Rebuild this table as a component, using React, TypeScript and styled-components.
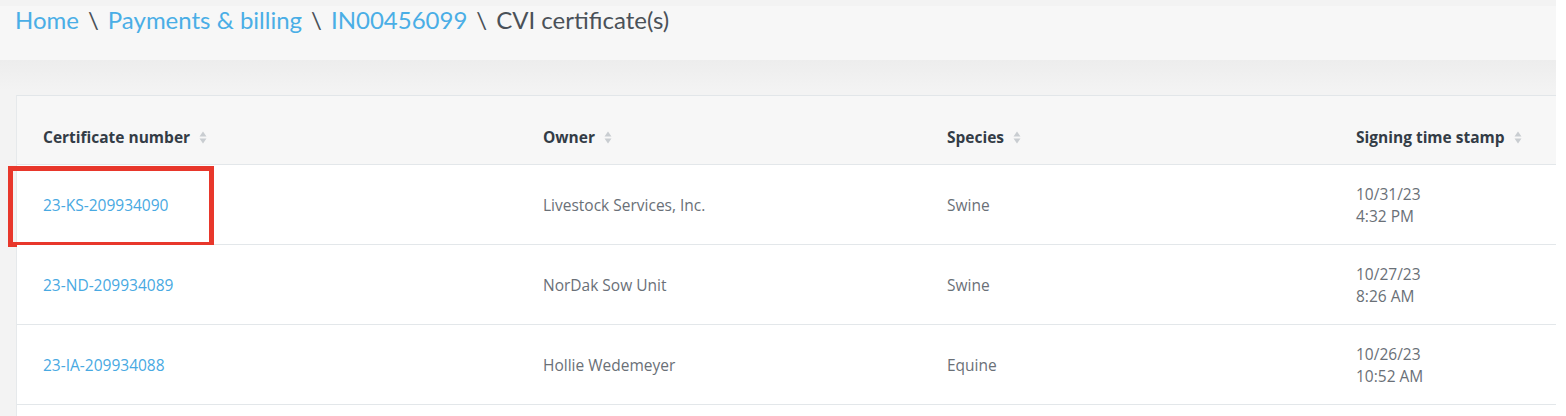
import React from "react";
import styled, { createGlobalStyle } from "styled-components";

const Global = createGlobalStyle`
  html, body { margin: 0; padding: 0; background: #ffffff; }
  body { font-family: "Open Sans", "Liberation Sans", sans-serif; }
`;

const Page = styled.div`
  width: 1556px;
  padding-top: 6px;
  height: 410px;
  display: flex;
  flex-direction: column;
  background: #f3f3f3;
  overflow: hidden;
`;

const Header = styled.header`
  height: 54px;
  background: #f7f7f7;
  padding: 0 0 0 15px;
  box-sizing: border-box;
`;

const Crumbs = styled.nav`
  display: flex;
  align-items: baseline;
  gap: 9px;
  font-family: Lato, "Open Sans", sans-serif;
  font-size: 24px;
  line-height: 28px;
`;

const CrumbLink = styled.a`
  color: #4aaee6;
  text-decoration: none;
`;

const Sep = styled.span`
  color: #4a5158;
`;

const Current = styled.span`
  color: #4a5158;
`;

const Body = styled.main`
  flex: 1;
  padding: 35px 0 0 16px;
  background: linear-gradient(#ededed 0px, #f3f3f3 30px, #f3f3f3 100%);
`;

const Card = styled.section`
  background: #ffffff;
  border-top: 1px solid #e2e6e9;
  border-left: 1px solid #e6e9eb;
  height: 100%;
`;

const Row = styled.div<{ $head?: boolean }>`
  display: grid;
  grid-template-columns: 500px 404px 409px 1fr;
  padding-left: 26px;
  height: ${(p) => (p.$head ? "68px" : "79px")};
  align-items: center;
  border-bottom: 1px solid #e3e7ea;
  background: ${(p) => (p.$head ? "#f7f7f7" : "#ffffff")};
  position: relative;
`;

const HeadCell = styled.div`
  display: flex;
  align-items: center;
  gap: 9px;
  padding-top: 14px;
  font-weight: 700;
  font-size: 15.5px;
  color: #333c46;
`;

const Cell = styled.div`
  font-size: 15.5px;
  line-height: 22px;
  color: #6a7077;
`;

const LinkCell = styled.a`
  font-size: 15.5px;
  color: #48a9e2;
  text-decoration: none;
`;

const Highlight = styled.div`
  position: absolute;
  left: -9px;
  top: 1px;
  width: 206px;
  height: 81px;
  box-sizing: border-box;
  border: 5px solid #e8372b;
  pointer-events: none;
`;

const SortIcon = () => (
  <svg width="8" height="13" viewBox="0 0 8 13" aria-hidden>
    <path d="M4 0.5 L7.5 5.5 H0.5 Z" fill="#c9cdd1" />
    <path d="M4 12.5 L7.5 7.5 H0.5 Z" fill="#c9cdd1" />
  </svg>
);

const rows = [
  { id: "23-KS-209934090", owner: "Livestock Services, Inc.", species: "Swine", date: "10/31/23", time: "4:32 PM" },
  { id: "23-ND-209934089", owner: "NorDak Sow Unit", species: "Swine", date: "10/27/23", time: "8:26 AM" },
  { id: "23-IA-209934088", owner: "Hollie Wedemeyer", species: "Equine", date: "10/26/23", time: "10:52 AM" },
];

export default function App() {
  return (
    <>
      <Global />
      <Page>
        <Header>
          <Crumbs>
            <CrumbLink href="#">Home</CrumbLink>
            <Sep>\</Sep>
            <CrumbLink href="#">Payments &amp; billing</CrumbLink>
            <Sep>\</Sep>
            <CrumbLink href="#">IN00456099</CrumbLink>
            <Sep>\</Sep>
            <Current>CVI certificate(s)</Current>
          </Crumbs>
        </Header>
        <Body>
          <Card>
            <Row $head>
              <HeadCell>Certificate number <SortIcon /></HeadCell>
              <HeadCell>Owner <SortIcon /></HeadCell>
              <HeadCell>Species <SortIcon /></HeadCell>
              <HeadCell>Signing time stamp <SortIcon /></HeadCell>
            </Row>
            {rows.map((r, i) => (
              <Row key={r.id}>
                <Cell>
                  <LinkCell href="#">{r.id}</LinkCell>
                </Cell>
                <Cell>{r.owner}</Cell>
                <Cell>{r.species}</Cell>
                <Cell>
                  {r.date}
                  <br />
                  {r.time}
                </Cell>
                {i === 0 && <Highlight />}
              </Row>
            ))}
          </Card>
        </Body>
      </Page>
    </>
  );
}
